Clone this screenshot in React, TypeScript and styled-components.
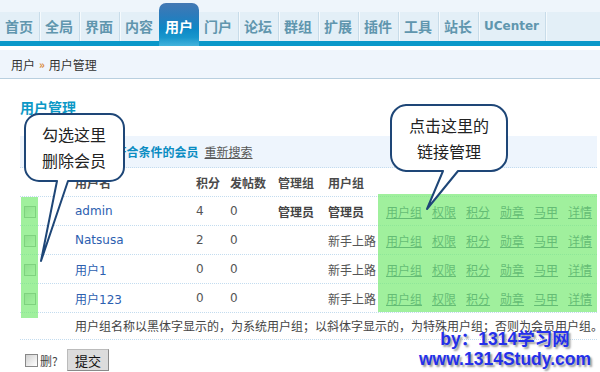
import React from "react";
import styled, { createGlobalStyle } from "styled-components";

const Global = createGlobalStyle`
  html, body { margin: 0; padding: 0; background: #fff; }
  body { font-family: "DejaVu Sans", "Noto Sans CJK SC", sans-serif; font-size: 12px; color: #444; }
`;

const Page = styled.div`
  position: relative;
  width: 600px;
  height: 372px;
  overflow: hidden;
  background: #fff;
`;

const Header = styled.div`
  background: #eef5fb;
  padding-top: 12px;
`;

const NavBar = styled.div`
  display: flex;
  height: 29px;
  background: #e3eff7;
  font-family: "Noto Sans CJK SC", sans-serif;
`;

const Tab = styled.div<{ $active?: boolean; $latin?: boolean }>`
  position: relative;
  z-index: 1;
  box-sizing: border-box;
  padding: 0 6px 0 5px;
  height: 29px;
  line-height: 29px;
  font-size: ${(p) => (p.$latin ? "12px" : "14px")};
  font-family: ${(p) => (p.$latin ? '"DejaVu Sans", sans-serif' : '"Noto Sans CJK SC", sans-serif')};
  font-weight: 700;
  color: #6096ae;
  border-right: 1px solid #c8dce9;
  box-shadow: 1px 0 0 #f5fafd;
  white-space: nowrap;
  ${(p) =>
    p.$active &&
    `
    margin-top: -9px;
    height: 43px;
    margin-bottom: -5px;
    padding: 9px 6px 0 6px;
    margin-left: -1px;
    color: #fff;
    border-right: none;
    box-shadow: none;
    border-radius: 7px 7px 0 0;
    background: linear-gradient(#4378b3 0%, #2a7cbc 30%, #0d88c6 60%, #1896cc 80%, #45b4dc 100%);
  `}
`;

const BlueBar = styled.div`
  height: 5px;
  background: #0b98c9;
`;

const Gap = styled.div`
  height: 4px;
  background: #fff;
`;

const Crumb = styled.div`
  height: 28px;
  display: flex;
  align-items: center;
  gap: 4px;
  padding-left: 11px;
  background: #eff5fc;
  border-bottom: 1px solid #b9cfdf;
  font-family: "Noto Sans CJK SC", sans-serif;
  font-size: 12px;
  color: #333;
`;

const CrumbSep = styled.span`
  color: #d98a3a;
  font-size: 11px;
  font-weight: 700;
`;

const Content = styled.div`
  padding: 0 3px 0 20px;
`;

const Title = styled.div`
  padding-top: 20px;
  height: 16px;
  line-height: 16px;
  font-family: "Noto Sans CJK SC", sans-serif;
  font-size: 14px;
  font-weight: 700;
  color: #0c98c6;
`;

const SearchBar = styled.div`
  margin-top: 21px;
  height: 31px;
  display: flex;
  align-items: center;
  gap: 6px;
  padding-left: 22px;
  background: #eef5fd;
  border-bottom: 1px dotted #c3dcef;
  font-family: "Noto Sans CJK SC", sans-serif;
  font-size: 12px;
`;

const Found = styled.span`
  font-weight: 700;
  color: #0a8cc2;
`;

const Resetlink = styled.a`
  color: #555;
  text-decoration: underline;
`;

const Row = styled.div<{ $head?: boolean }>`
  display: grid;
  grid-template-columns: 55px 121px 34px 48px 50px 58px 1fr;
  height: 28px;
  align-items: center;
  border-bottom: 1px dotted #c3dcef;
  font-weight: ${(p) => (p.$head ? 700 : 400)};
  color: ${(p) => (p.$head ? "#4a4a4a" : "#555")};
  font-family: "DejaVu Sans", "Noto Sans CJK SC", sans-serif;
  font-size: 12px;
`;

const Cell = styled.div<{ $bold?: boolean }>`
  white-space: nowrap;
  font-weight: ${(p) => (p.$bold ? 700 : "inherit")};
  color: ${(p) => (p.$bold ? "#444" : "inherit")};
`;

const Box = styled.span`
  display: inline-block;
  box-sizing: border-box;
  width: 12px;
  height: 12px;
  margin-left: 4px;
  border: 1px solid #8f9a9a;
  background: linear-gradient(135deg, #c8cccc 0%, #eef0f0 70%, #fff 100%);
  vertical-align: middle;
`;

const NameLink = styled.a`
  color: #2c60b0;
  text-decoration: none;
`;

const Links = styled.div`
  display: flex;
  gap: 10px;
`;

const OpLink = styled.a`
  color: #37507a;
  text-decoration: underline;
  white-space: nowrap;
`;

const Note = styled.div`
  height: 26px;
  line-height: 26px;
  padding-left: 55px;
  border-bottom: 1px dotted #c3dcef;
  font-family: "Noto Sans CJK SC", sans-serif;
  font-size: 12px;
  color: #444;
  white-space: nowrap;
`;

const Submit = styled.div`
  display: flex;
  align-items: center;
  padding-top: 9px;
  font-family: "Noto Sans CJK SC", sans-serif;
  font-size: 12px;
  color: #444;
`;

const DelBox = styled.span`
  display: inline-block;
  box-sizing: border-box;
  width: 13px;
  height: 13px;
  margin-left: 5px;
  border: 1px solid #888;
  background: linear-gradient(135deg, #d0d0d0 0%, #f2f2f2 70%, #fff 100%);
`;

const DelLabel = styled.span`
  margin-left: 2px;
  width: 27px;
`;

const Button = styled.button`
  box-sizing: border-box;
  width: 42px;
  height: 22px;
  padding: 0;
  border: 1px solid #8a8a8a;
  border-top-color: #bbb;
  border-left-color: #bbb;
  background: #dcdcdc;
  font-family: "Noto Sans CJK SC", sans-serif;
  font-size: 13px;
  color: #111;
`;

const Overlay = styled.div<{ $l: number; $t: number; $w: number; $h: number }>`
  position: absolute;
  left: ${(p) => p.$l}px;
  top: ${(p) => p.$t}px;
  width: ${(p) => p.$w}px;
  height: ${(p) => p.$h}px;
  background: rgba(119, 234, 115, 0.7);
`;

const BubbleWrap = styled.div<{ $l: number; $t: number }>`
  position: absolute;
  left: ${(p) => p.$l}px;
  top: ${(p) => p.$t}px;
`;

const BubbleText = styled.div<{ $l: number; $t: number; $w: number }>`
  position: absolute;
  left: ${(p) => p.$l}px;
  top: ${(p) => p.$t}px;
  width: ${(p) => p.$w}px;
  text-align: center;
  font-family: "Noto Sans CJK SC", sans-serif;
  font-size: 16px;
  line-height: 26px;
  color: #222;
  white-space: nowrap;
`;

const Watermark = styled.div`
  position: absolute;
  left: 410px;
  top: 329px;
  width: 190px;
  text-align: center;
  font-family: "Liberation Sans", "Noto Sans CJK SC", sans-serif;
  font-weight: 700;
  font-size: 17.5px;
  line-height: 20px;
  color: #2430ea;
  text-shadow: 2px 2px 2px #9a9a9a;
  white-space: nowrap;
`;

const tabs = ["首页", "全局", "界面", "内容", "用户", "门户", "论坛", "群组", "扩展", "插件", "工具", "站长"];
const ops = ["用户组", "权限", "积分", "勋章", "马甲", "详情"];
const users = [
  { name: "admin", credits: "4", posts: "0", admin: "管理员", group: "管理员", bold: true },
  { name: "Natsusa", credits: "2", posts: "0", admin: "", group: "新手上路", bold: false },
  { name: "用户1", credits: "0", posts: "0", admin: "", group: "新手上路", bold: false },
  { name: "用户123", credits: "0", posts: "0", admin: "", group: "新手上路", bold: false },
];

export default function App() {
  return (
    <Page>
      <Global />
      <Header>
        <NavBar>
          {tabs.map((t) => (
            <Tab key={t} $active={t === "用户"}>
              {t}
            </Tab>
          ))}
          <Tab $latin>UCenter</Tab>
        </NavBar>
        <BlueBar />
      </Header>
      <Gap />
      <Crumb>
        <span>用户</span>
        <CrumbSep>»</CrumbSep>
        <span>用户管理</span>
      </Crumb>
      <Content>
        <Title>用户管理</Title>
        <SearchBar>
          <Found>共搜索到 4 名符合条件的会员</Found>
          <Resetlink>重新搜索</Resetlink>
        </SearchBar>
        <Row $head>
          <Cell />
          <Cell>用户名</Cell>
          <Cell>积分</Cell>
          <Cell>发帖数</Cell>
          <Cell>管理组</Cell>
          <Cell>用户组</Cell>
          <Cell />
        </Row>
        {users.map((u) => (
          <Row key={u.name}>
            <Cell>
              <Box />
            </Cell>
            <Cell>
              <NameLink>{u.name}</NameLink>
            </Cell>
            <Cell>{u.credits}</Cell>
            <Cell>{u.posts}</Cell>
            <Cell $bold={u.bold}>{u.admin}</Cell>
            <Cell $bold={u.bold}>{u.group}</Cell>
            <Links>
              {ops.map((o) => (
                <OpLink key={o}>{o}</OpLink>
              ))}
            </Links>
          </Row>
        ))}
        <Note>用户组名称以黑体字显示的，为系统用户组；以斜体字显示的，为特殊用户组；否则为会员用户组。</Note>
        <Submit>
          <DelBox />
          <DelLabel>删?</DelLabel>
          <Button>提交</Button>
        </Submit>
      </Content>

      <Overlay $l={378} $t={194} $w={219} $h={118} />
      <Overlay $l={21} $t={197} $w={17} $h={121} />

      <BubbleWrap $l={24} $t={113}>
        <svg width="104" height="152" viewBox="0 0 104 152">
          <path
            d="M15,1 H86 A14,14 0 0 1 100,15 V54 A14,14 0 0 1 86,68 H44 L17,148 L33,68 H15 A14,14 0 0 1 1,54 V15 A14,14 0 0 1 15,1 Z"
            fill="#fff"
            stroke="#1e4677"
            strokeWidth="2"
            strokeLinejoin="round"
          />
        </svg>
        <BubbleText $l={0} $t={8} $w={100}>
          勾选这里
          <br />
          删除会员
        </BubbleText>
      </BubbleWrap>

      <BubbleWrap $l={389} $t={103}>
        <svg width="121" height="110" viewBox="0 0 121 110">
          <path
            d="M17,2 H102 A16,16 0 0 1 118,18 V52 A16,16 0 0 1 102,68 H69 L38,106 L54,68 H17 A16,16 0 0 1 2,52 V18 A16,16 0 0 1 17,2 Z"
            fill="#fff"
            stroke="#1e4677"
            strokeWidth="2"
            strokeLinejoin="round"
          />
        </svg>
        <BubbleText $l={2} $t={9} $w={116}>
          点击这里的
          <br />
          链接管理
        </BubbleText>
      </BubbleWrap>

      <Watermark>
        by：1314学习网
        <br />
        www.1314Study.com
      </Watermark>
    </Page>
  );
}
